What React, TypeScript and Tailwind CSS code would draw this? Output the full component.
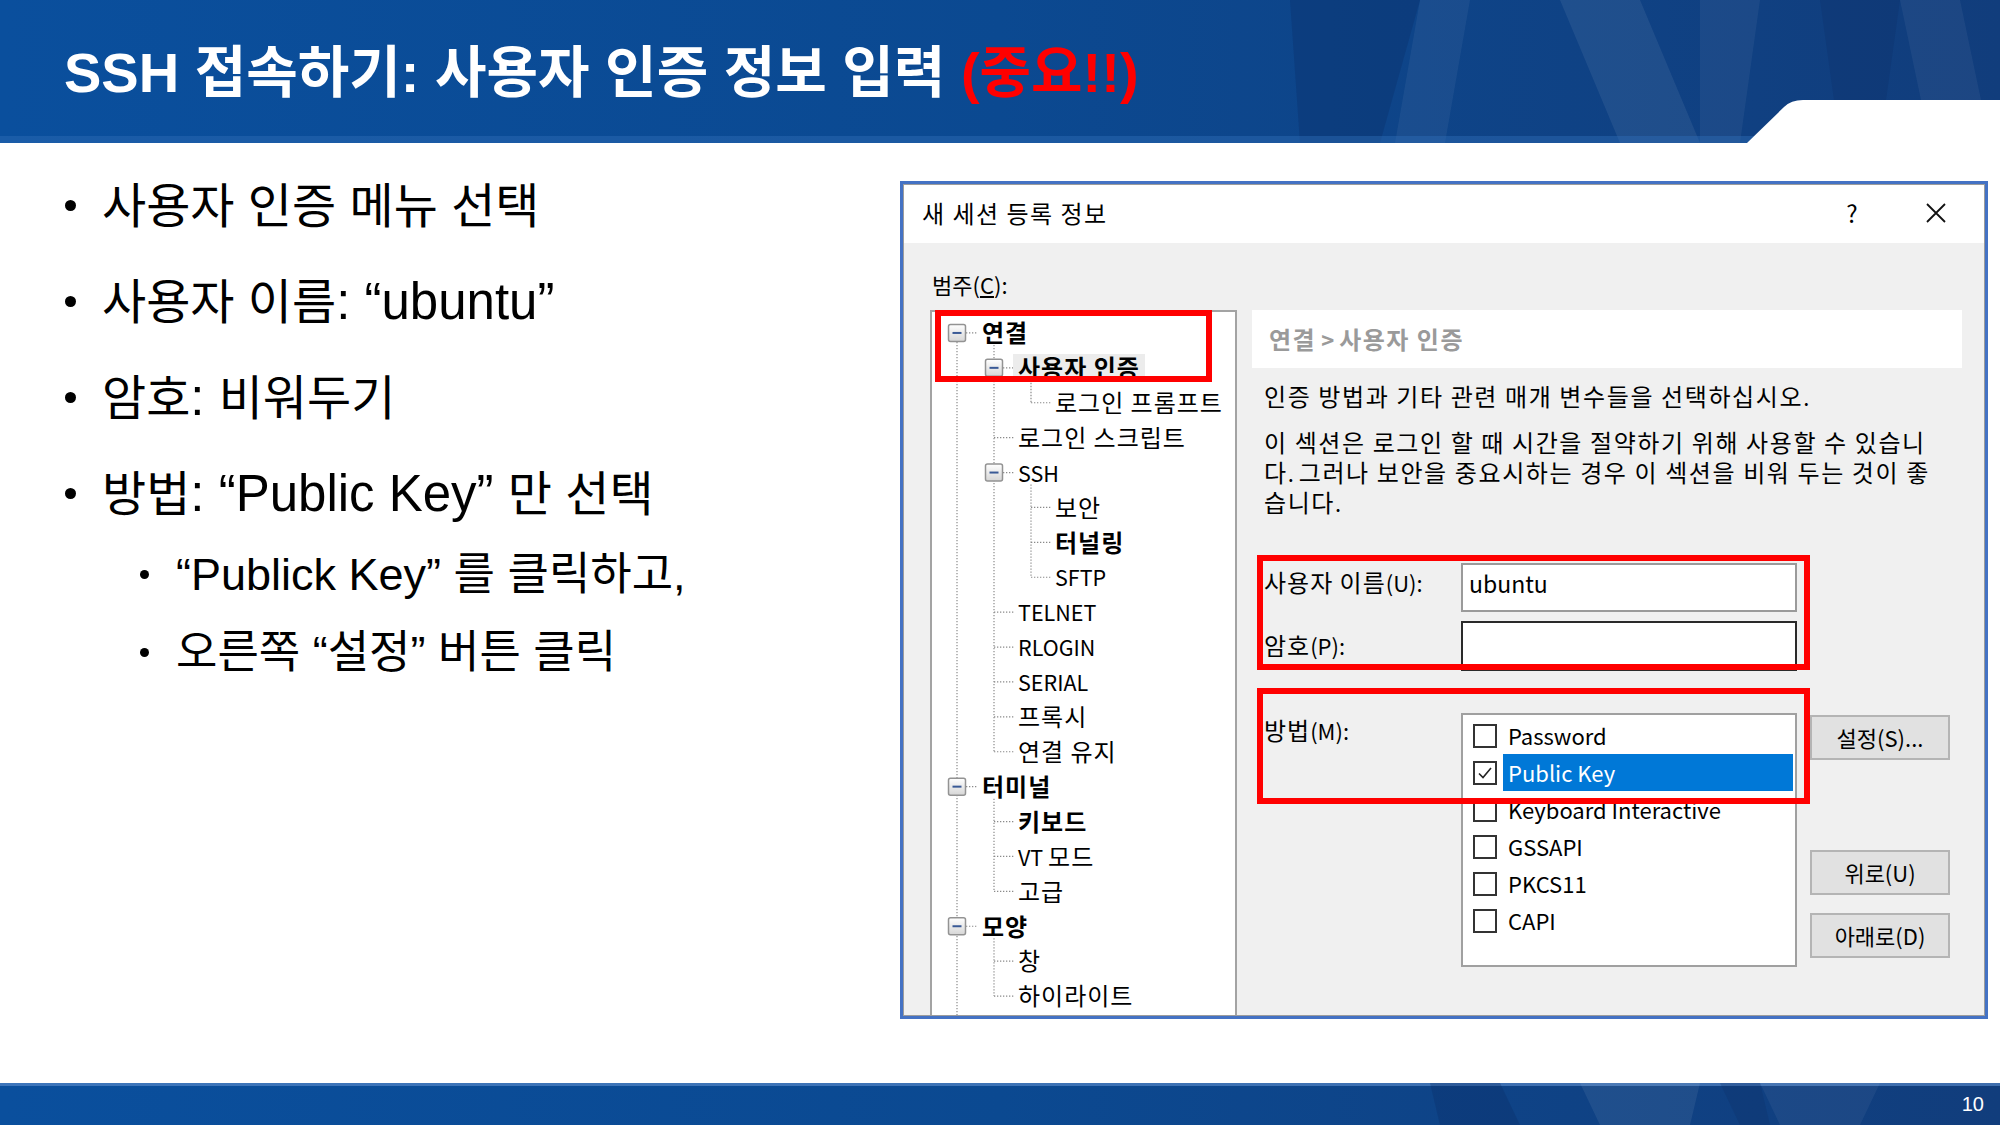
import React from 'react'

type TreeItem = {
  label: string
  level: 1 | 2 | 3
  exp?: boolean
  bold?: boolean
  selected?: boolean
}

const tree: TreeItem[] = [
  { label: '연결', level: 1, exp: true, bold: true },
  { label: '사용자 인증', level: 2, exp: true, bold: true, selected: true },
  { label: '로그인 프롬프트', level: 3 },
  { label: '로그인 스크립트', level: 2 },
  { label: 'SSH', level: 2, exp: true },
  { label: '보안', level: 3 },
  { label: '터널링', level: 3, bold: true },
  { label: 'SFTP', level: 3 },
  { label: 'TELNET', level: 2 },
  { label: 'RLOGIN', level: 2 },
  { label: 'SERIAL', level: 2 },
  { label: '프록시', level: 2 },
  { label: '연결 유지', level: 2 },
  { label: '터미널', level: 1, exp: true, bold: true },
  { label: '키보드', level: 2, bold: true },
  { label: 'VT 모드', level: 2 },
  { label: '고급', level: 2 },
  { label: '모양', level: 1, exp: true, bold: true },
  { label: '창', level: 2 },
  { label: '하이라이트', level: 2 },
]

const indent = { 1: 'pl-[50px]', 2: 'pl-[86px]', 3: 'pl-[123px]' }

const methods = [
  { label: 'Password', checked: false },
  { label: 'Public Key', checked: true },
  { label: 'Keyboard Interactive', checked: false },
  { label: 'GSSAPI', checked: false },
  { label: 'PKCS11', checked: false },
  { label: 'CAPI', checked: false },
]

// Hangul in the screenshot renders wider than the latin next to it,
// so hangul runs get their own size / tracking
function Hg({ text, cls }: { text: string; cls: string }) {
  const parts = text.split(/([가-힣]+(?: [가-힣]+)*)/)
  return (
    <span>
      {parts.map((p, i) =>
        /[가-힣]/.test(p) ? (
          <span key={i} className={cls}>
            {p}
          </span>
        ) : (
          p
        )
      )}
    </span>
  )
}

const KO = 'text-[24px] tracking-[1px]'
const KO_DESC = 'text-[24px] tracking-[1.6px]'

const descLines = [
  '이 섹션은 로그인 할 때 시간을 절약하기 위해 사용할 수 있습니',
  '다. 그러나 보안을 중요시하는 경우 이 섹션을 비워 두는 것이 좋',
  '습니다.',
]

// tree geometry (relative to the inner box)
const ROW_H = 34.9
const ROW_TOP = 3.5
const rowY = (i: number) => ROW_TOP + ROW_H * i + ROW_H / 2
const colX = { 1: 25, 2: 62, 3: 99 }

function TreeLines() {
  const v = (x: number, a: number, b: number, key: string) => (
    <line key={key} x1={x} x2={x} y1={a} y2={b} stroke="#8a8a8a" strokeWidth={1.2} strokeDasharray="1.3 1.7" />
  )
  const h = (x1: number, x2: number, y: number, key: string) => (
    <line key={key} x1={x1} x2={x2} y1={y} y2={y} stroke="#8a8a8a" strokeWidth={1.2} strokeDasharray="1.3 1.7" />
  )
  const lines: React.ReactNode[] = []
  lines.push(v(colX[1], rowY(0), 760, 'v1'))
  lines.push(v(colX[2], rowY(0) + 12, rowY(12), 'v2a'))
  lines.push(v(colX[2], rowY(13) + 12, rowY(16), 'v2b'))
  lines.push(v(colX[2], rowY(17) + 12, rowY(19), 'v2c'))
  lines.push(v(colX[3], rowY(1) + 12, rowY(2), 'v3a'))
  lines.push(v(colX[3], rowY(4) + 12, rowY(7), 'v3b'))
  tree.forEach((t, i) => {
    const x = colX[t.level]
    lines.push(h(t.exp ? x + 9 : x, x + 21, rowY(i), `h${i}`))
  })
  return (
    <svg className="absolute left-0 top-0" width={305} height={760}>
      <defs>
        <linearGradient id="exg" x1="0" y1="0" x2="0" y2="1">
          <stop offset="0" stopColor="#ffffff" />
          <stop offset="1" stopColor="#d6d6d6" />
        </linearGradient>
      </defs>
      {lines}
      {tree.map((t, i) =>
        t.exp ? (
          <g key={`e${i}`}>
            <rect x={colX[t.level] - 8.5} y={rowY(i) - 8.5} width={17} height={17} rx={2} fill="url(#exg)" stroke="#939393" strokeWidth={1.5} />
            <line x1={colX[t.level] - 4.5} x2={colX[t.level] + 4.5} y1={rowY(i)} y2={rowY(i)} stroke="#3a5a96" strokeWidth={2} />
          </g>
        ) : null
      )}
    </svg>
  )
}

function Bullet({ sub, text }: { sub?: boolean; text: string }) {
  return (
    <div className={sub ? 'flex items-center h-[78px] pl-[140px]' : 'flex items-center h-[96px] pl-[65px]'}>
      <span className={sub ? 'w-[9px] h-[9px] rounded-full bg-black shrink-0' : 'w-[11px] h-[11px] rounded-full bg-black shrink-0'} />
      <span className={sub ? 'ml-[27px] text-[45px] leading-none whitespace-nowrap' : 'ml-[26px] text-[51px] leading-none whitespace-nowrap'}>
        {sub ? text : <Hg text={text} cls="text-[48px]" />}
      </span>
    </div>
  )
}

function Header() {
  return (
    <div className="relative h-[143px] shrink-0 bg-gradient-to-r from-[#0a4f9d] via-[#0b4991] to-[#113d7c] overflow-hidden">
      <svg className="absolute left-0 top-0" width={2000} height={143}>
        <polygon points="1290,0 1420,0 1380,143 1300,143" fill="#0a2c63" opacity={0.3} />
        <polygon points="1420,0 1470,0 1445,143 1395,143" fill="#ffffff" opacity={0.05} />
        <polygon points="1560,0 1640,0 1700,143 1620,143" fill="#ffffff" opacity={0.07} />
        <polygon points="1700,0 1760,0 1740,143 1700,143" fill="#ffffff" opacity={0.05} />
        <polygon points="1820,0 1900,0 1880,143 1840,143" fill="#0a2c63" opacity={0.25} />
        <polygon points="1900,0 1960,0 1990,143 1930,143" fill="#ffffff" opacity={0.05} />
        <rect x={0} y={136} width={2000} height={7} fill="#2f6db5" opacity={0.45} />
        <path d="M1747,143 L1784,107 Q1791,100 1803,100 L2000,100 L2000,143 Z" fill="#ffffff" />
      </svg>
      <div className="relative pl-[64px] pt-[39px] text-[56px] leading-[1.2] font-bold text-white whitespace-nowrap font-['Liberation_Sans','Noto_Sans_CJK_KR',sans-serif]">
        SSH 접속하기: 사용자 인증 정보 입력 <span className="text-[#ff0000]">(중요!!)</span>
      </div>
    </div>
  )
}

function Footer() {
  return (
    <div className="relative h-[42px] shrink-0 bg-gradient-to-r from-[#0a4f9d] via-[#0b4991] to-[#113d7c] overflow-hidden">
      <svg className="absolute left-0 top-0" width={2000} height={42}>
        <rect x={0} y={0} width={2000} height={3} fill="#5f8fcf" opacity={0.6} />
        <polygon points="1430,0 1500,0 1520,42 1440,42" fill="#0a2c63" opacity={0.3} />
        <polygon points="1580,0 1700,0 1690,42 1600,42" fill="#ffffff" opacity={0.07} />
        <polygon points="1720,0 1760,0 1770,42 1740,42" fill="#0a2c63" opacity={0.25} />
        <polygon points="1760,0 1880,0 1860,42 1780,42" fill="#ffffff" opacity={0.05} />
      </svg>
      <div className="relative flex h-full items-center justify-end pr-[16px] text-[20px] text-white font-['Liberation_Sans_Narrow','Liberation_Sans',sans-serif]">
        10
      </div>
    </div>
  )
}

function Button({ label, className }: { label: string; className: string }) {
  return (
    <div className={`h-[45px] bg-[#e1e1e1] border-2 border-[#b4b4b4] flex items-center justify-center text-[22px] ${className}`}>
      {label}
    </div>
  )
}

function Dialog() {
  return (
    <div className="mt-[38px] w-[1088px] h-[838px] border-[3px] border-[#4472c4] flex flex-col overflow-hidden font-['Noto_Sans_CJK_KR',sans-serif] text-black">
      <div className="flex-1 flex flex-col border border-[#9c9c9c] bg-[#f0f0f0] overflow-hidden">
        <div className="h-[58px] shrink-0 bg-white flex items-center pl-[18px] pb-[3px] text-[22px]">
          <span className="flex-1 text-[24px] tracking-[1.5px]">새 세션 등록 정보</span>
          <span className="w-[30px] text-center mr-[58px] text-[24px]">?</span>
          <svg width={22} height={22} viewBox="0 0 22 22" className="mr-[37px]">
            <path d="M2 2 L20 20 M20 2 L2 20" stroke="#111" strokeWidth={1.8} />
          </svg>
        </div>
        <div className="flex-1 min-h-0 flex flex-col pl-[26px]">
          <div className="pt-[27px] pl-[2px] h-[56px] leading-[28px] text-[22px]">
            범주(<span className="underline">C</span>):
          </div>
          <div className="mt-[11px] flex flex-1 min-h-0">
            <div className="relative w-[307px] h-[760px] shrink-0 bg-white border-2 border-[#a3a3a3]">
              <TreeLines />
              <div className="relative pt-[3.5px] text-[21.5px] leading-[28px]">
                {tree.map((t, i) => (
                  <div key={i} className={`flex items-center h-[34.9px] whitespace-nowrap ${indent[t.level]}`}>
                    <span
                      className={`${t.bold ? 'font-bold' : ''} ${t.selected ? 'bg-[#ececec] -ml-[5px] px-[5px] h-[28px] flex items-center' : ''}`}
                    >
                      <Hg text={t.label} cls={KO} />
                    </span>
                  </div>
                ))}
              </div>
            </div>
            <div className="ml-[15px] w-[710px] flex flex-col">
              <div className="h-[58px] bg-white flex items-center pl-[17px] text-[22px] leading-[28px] font-bold text-[#9a9a9a]">
                <Hg text="연결 > 사용자 인증" cls="text-[24px] tracking-[1.5px]" />
              </div>
              <div className="pl-[12px] pt-[13px] text-[22px] leading-[29px]">
                <div>
                  <Hg text="인증 방법과 기타 관련 매개 변수들을 선택하십시오." cls={KO_DESC} />
                </div>
                <div className="mt-[16px]">
                  {descLines.map(l => (
                    <div key={l}>
                      <Hg text={l} cls={KO_DESC} />
                    </div>
                  ))}
                </div>
              </div>
              <div className="mt-[46px] flex">
                <div className="w-[209px] pl-[12px] pt-[5px] leading-[28px] text-[22px] whitespace-nowrap">
                  <Hg text="사용자 이름(U):" cls={KO} />
                </div>
                <div className="w-[336px] h-[49px] bg-white border-2 border-[#9a9a9a] pl-[6px] pt-[4px] leading-[28px] text-[23px]">
                  ubuntu
                </div>
              </div>
              <div className="mt-[9px] flex">
                <div className="w-[209px] pl-[12px] pt-[10px] leading-[28px] text-[22px]">
                  <Hg text="암호(P):" cls={KO} />
                </div>
                <div className="w-[336px] h-[50px] bg-white border-2 border-[#2a2a2a]" />
              </div>
              <div className="mt-[42px] flex">
                <div className="w-[209px] pl-[12px] pt-[3px] leading-[28px] text-[22px]">
                  <Hg text="방법(M):" cls={KO} />
                </div>
                <div className="w-[336px] h-[254px] bg-white border-2 border-[#a0a0a0] pt-[2px] pl-[10px] pr-[2px]">
                  {methods.map(m => (
                    <div key={m.label} className="flex items-center h-[37px]">
                      <span className="w-[24px] h-[24px] border-2 border-[#333] bg-white shrink-0 flex items-center justify-center">
                        {m.checked && (
                          <svg width={18} height={18} viewBox="0 0 18 18">
                            <path d="M3 9.5 L7 13.5 L15 4" fill="none" stroke="#222" strokeWidth={1.6} />
                          </svg>
                        )}
                      </span>
                      <span
                        className={`ml-[6px] flex-1 h-full flex items-center pl-[5px] text-[22px] whitespace-nowrap ${
                          m.checked ? 'bg-[#0078d7] text-white' : ''
                        }`}
                      >
                        {m.label}
                      </span>
                    </div>
                  ))}
                </div>
                <div className="ml-[13px] w-[140px] flex flex-col">
                  <Button label="설정(S)..." className="mt-[2px]" />
                  <Button label="위로(U)" className="mt-[90px]" />
                  <Button label="아래로(D)" className="mt-[18px]" />
                </div>
              </div>
            </div>
          </div>
        </div>
      </div>
    </div>
  )
}

export default function App() {
  return (
    <div className="relative w-[2000px] h-[1125px] bg-white overflow-hidden flex flex-col">
      <Header />
      <div className="flex-1 min-h-0 flex">
        <div className="w-[900px] shrink-0 pt-[14px] text-black font-['Liberation_Sans','Noto_Sans_CJK_KR',sans-serif]">
          <Bullet text="사용자 인증 메뉴 선택" />
          <Bullet text="사용자 이름: “ubuntu”" />
          <Bullet text="암호: 비워두기" />
          <Bullet text="방법: “Public Key” 만 선택" />
          <div className="-mt-[6px]">
            <Bullet sub text="“Publick Key” 를 클릭하고," />
            <Bullet sub text="오른쪽 “설정” 버튼 클릭" />
          </div>
        </div>
        <Dialog />
      </div>
      <Footer />

      {/* red annotation boxes */}
      <div className="absolute left-[935px] top-[310px] w-[277px] h-[72px] border-[6px] border-[#ff0000]" />
      <div className="absolute left-[1257px] top-[555px] w-[553px] h-[115px] border-[6px] border-[#ff0000]" />
      <div className="absolute left-[1257px] top-[688px] w-[553px] h-[116px] border-[6px] border-[#ff0000]" />
    </div>
  )
}
